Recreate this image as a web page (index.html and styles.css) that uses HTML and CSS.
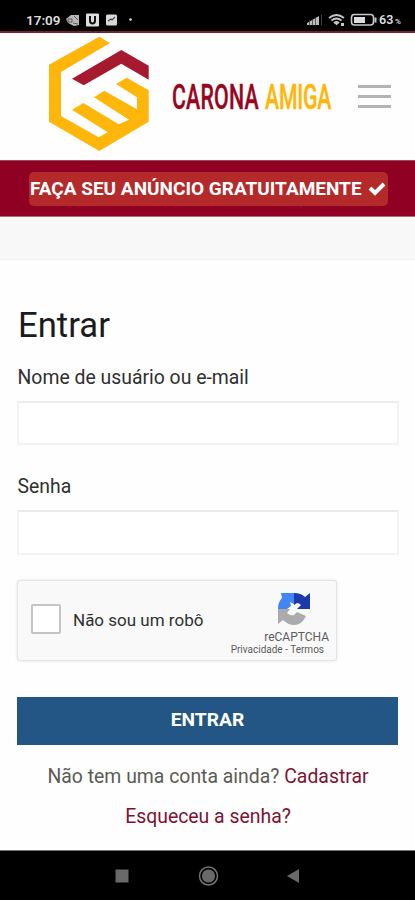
FILE: index.html
```html
<!DOCTYPE html>
<html lang="pt-BR">
<head>
<meta charset="utf-8">
<meta name="viewport" content="width=device-width, initial-scale=1">
<title>Carona Amiga - Entrar</title>
<link rel="stylesheet" href="styles.css">
</head>
<body>
<div class="status">
  <span class="time">17:09</span>
  <svg class="notices" width="70" height="16" viewBox="0 0 70 16">
    <path d="M0 7l5-4h8v10l-5 1-6-3z" fill="#b9b9b9"/><path d="M2 7h4v3H2zM8 4l4 4M7 11l5 1" stroke="#444" stroke-width=".8" fill="none"/>
    <rect x="20" y="1.500" width="13" height="13" rx="1" fill="#ddd"/><path d="M24 4v4.500q0 3 2.500 3t2.500-3V4" fill="none" stroke="#111" stroke-width="2"/>
    <rect x="40" y="2.500" width="11" height="11" rx="1.500" fill="#d8d8d8"/><path d="M42 9l3-2 1 1 3-3" fill="none" stroke="#444" stroke-width="1.200"/>
    <circle cx="64.500" cy="7.500" r="1.300" fill="#ddd"/>
  </svg>
  <svg class="signals" width="70" height="16" viewBox="0 0 70 16">
    <path d="M0 13v-2l12-7v9z" fill="#bbb"/><path d="M2.500 8v6M5.500 7v7M8.500 5v9" stroke="#333" stroke-width=".7"/><path d="M14.500 3v10" stroke="#444"/>
    <g fill="none" stroke="#c8c8c8" stroke-width="1.700"><path d="M22 6q7.500-6 15 0M24.500 8.500q5-4 10 0M27 11q2.500-2 5 0"/></g><path d="M27.500 11h4l-2 2.500zM34 11h3v3h-3z" fill="#c8c8c8"/>
    <rect x="44.500" y="2.500" width="22" height="10.500" rx="3" fill="none" stroke="#c8c8c8" stroke-width="1.600"/><rect x="47" y="5" width="11" height="6" fill="#ddd"/><path d="M68.500 5.500v5" stroke="#c8c8c8" stroke-width="2"/>
  </svg>
  <span class="level">63</span><span class="percent">%</span>
</div>
<header class="header">
  <svg class="brand" width="300" height="127" viewBox="40 33 300 127">
    <path fill="#ffb60a" d="M99.300 36.700L110 43 61 72v44l37.700 21.300 9-5L72 109.700l11.300-6.700 35.400 21.300 10.300-4.600-35-22.400 10.300-6.600L137 109.300v-12L116 84l10.700-6.300 22 12.600v31.400L99.300 151 49 121.700v-57z"/>
    <path fill="#a7192f" d="M72 78.700L121.300 50l27.400 15.700v14l-27.400-16-37.600 21.600z"/>
    <g transform="translate(172 109) scale(.61 1)"><text class="word red" x="0" y="0" textLength="142">CARONA</text></g>
    <g transform="translate(265 109) scale(.61 1)"><text class="word gold" x="0" y="0" textLength="109">AMIGA</text></g>
  </svg>
  <div class="menu"><i></i><i></i><i></i></div>
</header>
<div class="banner">
  <a class="promo"><span class="promo-text">FAÇA SEU ANÚNCIO GRATUITAMENTE</span>
    <svg width="18" height="15" viewBox="0 0 18 15"><path d="M2 7l5 5 9-9" fill="none" stroke="#fff" stroke-width="4"/></svg></a>
</div>
<div class="strip"></div>
<main class="login">
  <h1>Entrar</h1>
  <label class="label-user" for="user">Nome de usuário ou e-mail</label>
  <input id="user" type="text">
  <label class="label-pass" for="pass">Senha</label>
  <input id="pass" type="password">
  <div class="captcha">
    <span class="check"></span>
    <span class="robot">Não sou um robô</span>
    <div class="badge">
      <svg width="34" height="34" viewBox="0 0 34 34">
        <path fill="#1c3aa9" d="M17 1q7 0 11 4l5-4v16H20l4-4q-2-2-4-2l-3 2z"/>
        <path fill="#4285f4" d="M17 1v11l-4-2 1 4-4 3H1Q1 10 5 6L4 1z"/>
        <path fill="#ababab" d="M1 17h12l-3 4q3 3 7 2l3-3 9 4q-4 9-12 9-6 0-11-5l-5 4z"/>
      </svg>
      <span class="captcha-name">reCAPTCHA</span>
      <span class="captcha-links">Privacidade - Termos</span>
    </div>
  </div>
  <button type="button">ENTRAR</button>
  <p class="signup">Não tem uma conta ainda? <a>Cadastrar</a></p>
  <p class="forgot"><a>Esqueceu a senha?</a></p>
</main>
<nav class="navbar">
  <svg width="190" height="24" viewBox="0 0 190 24">
    <rect x="2.500" y="5.500" width="13" height="13" fill="#696969"/>
    <circle cx="95.500" cy="12" r="9" fill="none" stroke="#747474" stroke-width="1.500"/><circle cx="95.500" cy="12" r="6.600" fill="#696969"/>
    <path d="M174 12l12-7v14z" fill="#696969"/>
  </svg>
</nav>
</body>
</html>
```
FILE: styles.css
```css
* { box-sizing: border-box; }
body { margin: 0; width: 415px; height: 900px; overflow: hidden; background: #fefefe; font-family: Roboto, sans-serif; color: #303030; display: flex; flex-direction: column; }
.status { height: 33px; flex: none; background: #000; border-bottom: 2px solid #74202f; color: #ddd; display: flex; align-items: center; padding: 8px 12px 0 26px; }
.time { font-size: 13.500px; font-weight: 600; width: 40px; line-height: 16px; white-space: nowrap; }
.signals { margin-left: auto; margin-right: 2px; }
.level { font-size: 12.500px; font-weight: 600; width: 16px; }
.percent { font-size: 8px; font-weight: 600; padding-top: 3px; width: 8px; }
.header { height: 127px; flex: none; padding-left: 40px; display: flex; align-items: center; }
.word { font-size: 35px; font-weight: 500; }
.red { fill: #96061f; stroke: #96061f; stroke-width: .4px; }
.gold { fill: #ffb60a; stroke: #ffb60a; stroke-width: .4px; }
.menu { width: 33px; margin-left: 18px; display: grid; gap: 7px; }
.menu i { height: 3px; background: #b3b3b3; }
.banner { height: 57px; flex: none; background: #900022; border-top: 1px solid #a64760; border-bottom: 1px solid #b46a7c; padding: 11px 0 0 29px; }
.promo { width: 359px; height: 34px; border-radius: 5px; background: #b42a2b; display: flex; align-items: center; justify-content: space-between; padding: 0 2px 2px 1px; color: #fff; font-size: 19px; font-weight: 700; white-space: nowrap; }
.strip { height: 43px; flex: none; background: #f8f8f8; border-bottom: 1px solid #f1f1f1; }
.login { height: 590px; flex: none; padding: 41px 16px 0 17px; display: flex; flex-direction: column; }
h1 { margin: 0 0 0 1px; font-size: 34.700px; line-height: 48px; font-weight: 370; color: #1b1b1b; }
label { font-size: 19.400px; line-height: 24px; padding-left: .5px; }
.label-user { margin-top: 17px; }
.label-pass { margin-top: 30px; }
input { width: 382px; height: 44px; margin: 11px 0 0; padding: 0 8px; border: 2px solid #f3f3f3; border-top-color: #ececec; background: #fff; font: inherit; flex: none; }
.label-pass + input { margin-top: 11px; height: 45px; }
.captcha { width: 320px; height: 81px; margin-top: 25px; flex: none; background: #f9f9f9; border: 1px solid #e4e4e4; border-radius: 3px; box-shadow: 0 0 3px #e3e3e3; display: flex; align-items: center; padding-left: 13px; }
.check { width: 30px; height: 30px; border: 2px solid #c4c4c4; border-radius: 2px; background: #fff; margin-top: -3px; }
.robot { margin: -2px 0 0 12px; font-size: 17px; white-space: nowrap; }
.badge { margin-left: auto; width: 110px; height: 79px; padding-top: 11px; display: flex; flex-direction: column; align-items: flex-end; color: #5c5c5c; }
.badge svg { margin-right: 25px; }
.captcha-name { font-size: 12px; line-height: 14px; margin: 4px 7px 0 0; }
.captcha-links { font-size: 10px; line-height: 12px; margin-right: 12px; white-space: nowrap; }
button { width: 381px; height: 48px; margin: 36px 0 0; padding: 0 0 3px; border: 0; background: #235685; color: #fff; font: 700 19.200px Roboto, sans-serif; flex: none; }
p { margin: 0; text-align: center; font-size: 19.400px; line-height: 24px; color: #5b5b54; white-space: nowrap; }
a { color: #7e1232; }
.signup { margin-top: 20px; }
.forgot { margin-top: 16px; }
.navbar { flex: 1; background: #000; border-top: 1px solid #777; display: flex; justify-content: center; align-items: center; }
```
